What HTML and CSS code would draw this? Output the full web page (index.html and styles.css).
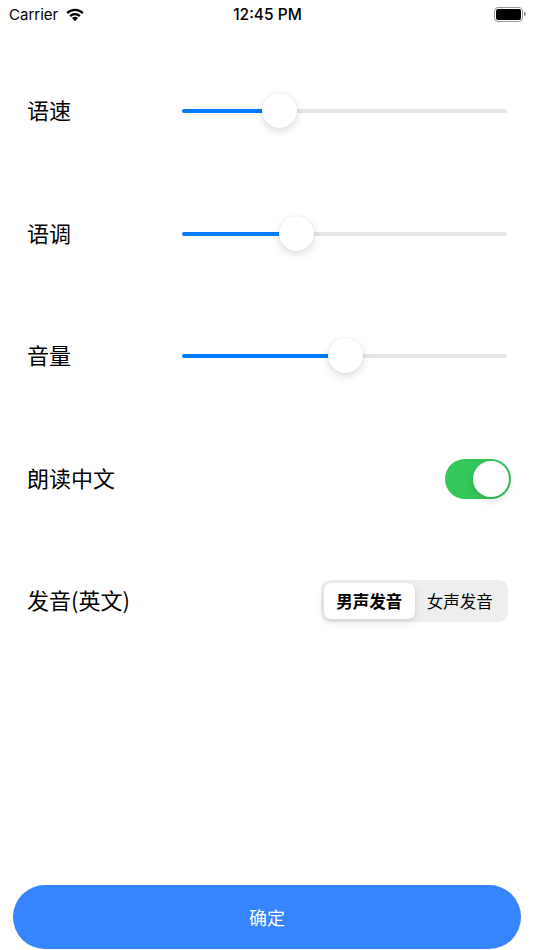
FILE: index.html
```html
<!DOCTYPE html>
<html lang="zh-CN">
<head>
    <meta charset="UTF-8">
    <title>语音设置</title>
    <link rel="stylesheet" href="styles.css">
</head>
<body>
    <div class="page">
        <div class="status-bar">
            <div class="carrier">
                Carrier
                <svg class="wifi" width="20" height="15" viewBox="0 0 18 13">
                    <path d="M9 12.5 L6.3 9.6 A3.8 3.8 0 0 1 11.7 9.6 Z" fill="#000"/>
                    <path d="M3.9 7.2 A7.3 7.3 0 0 1 14.1 7.2 L12.6 8.7 A5.2 5.2 0 0 0 5.4 8.7 Z" fill="#000"/>
                    <path d="M1.2 4.5 A11 11 0 0 1 16.8 4.5 L15.3 6 A8.9 8.9 0 0 0 2.7 6 Z" fill="#000"/>
                </svg>
            </div>
            <div class="time">12:45 PM</div>
            <div class="battery">
                <div class="battery-body"><div class="battery-level"></div></div>
                <div class="battery-cap"></div>
            </div>
        </div>

        <div class="settings">
            <div class="row">
                <div class="label">语速</div>
                <div class="slider" style="--pos: 97px;">
                    <div class="track"></div>
                    <div class="fill"></div>
                    <div class="thumb"></div>
                </div>
            </div>
            <div class="row">
                <div class="label">语调</div>
                <div class="slider" style="--pos: 114px;">
                    <div class="track"></div>
                    <div class="fill"></div>
                    <div class="thumb"></div>
                </div>
            </div>
            <div class="row">
                <div class="label">音量</div>
                <div class="slider" style="--pos: 163px;">
                    <div class="track"></div>
                    <div class="fill"></div>
                    <div class="thumb"></div>
                </div>
            </div>
            <div class="row">
                <div class="label">朗读中文</div>
                <div class="switch on"><div class="knob"></div></div>
            </div>
            <div class="row">
                <div class="label">发音(英文)</div>
                <div class="segmented">
                    <div class="segment active">男声发音</div>
                    <div class="segment">女声发音</div>
                </div>
            </div>
        </div>

        <button class="confirm">确定</button>
    </div>
</body>
</html>
```

FILE: styles.css
```css
:root {
    --blue: #007aff;
    --green: #34c759;
    --track: #e5e5e7;
}

body {
    margin: 0;
    background: #fff;
    font-family: 'Noto Sans CJK SC', 'Noto Sans', sans-serif;
    color: #000;
}

.page {
    display: flex;
    flex-direction: column;
    min-height: 100vh;
}

.status-bar {
    height: 28px;
    display: flex;
    align-items: center;
    justify-content: space-between;
    padding: 0 8px 0 9px;
    font-family: 'Inter', 'Liberation Sans', sans-serif;
    font-size: 15px;
}

.carrier {
    flex: 1;
    display: flex;
    align-items: center;
    gap: 7px;
}

.time {
    font-weight: 500;
    font-size: 15.5px;
}

.battery {
    flex: 1;
    display: flex;
    justify-content: flex-end;
    align-items: center;
}

.battery-body {
    width: 25px;
    height: 11px;
    border: 1px solid #9a9a9a;
    border-radius: 4px;
    padding: 1px;
}

.battery-level {
    height: 100%;
    background: #000;
    border-radius: 2px;
}

.battery-cap {
    width: 2px;
    height: 4px;
    margin-left: 1px;
    background: #9a9a9a;
    border-radius: 0 2px 2px 0;
}

.settings {
    flex: 1;
    padding-top: 22px;
}

.row {
    height: 122.5px;
    display: flex;
    align-items: center;
    padding: 0 23px 0 27px;
}

.label {
    width: 155px;
    padding-bottom: 4px;
    font-size: 22px;
    line-height: 1;
}

.slider {
    position: relative;
    flex: 1;
    margin-right: 4px;
    height: 36px;
}

.track, .fill {
    position: absolute;
    top: 16px;
    left: 0;
    height: 4px;
    border-radius: 2px;
}

.track {
    right: 0;
    background: var(--track);
}

.fill {
    width: var(--pos);
    background: var(--blue);
}

.thumb {
    position: absolute;
    top: 0;
    left: calc(var(--pos) - 17px);
    width: 35px;
    height: 35px;
    border-radius: 50%;
    background: #fff;
    box-shadow: 0 3px 8px rgba(0,0,0,0.15), 0 0 1px rgba(0,0,0,0.12);
}

.switch {
    margin-left: auto;
    width: 66px;
    height: 40px;
    border-radius: 20px;
    background: var(--track);
    display: flex;
    align-items: center;
    padding: 2px;
    box-sizing: border-box;
}

.switch.on {
    background: var(--green);
    justify-content: flex-end;
}

.knob {
    width: 36px;
    height: 36px;
    border-radius: 50%;
    background: #fff;
    box-shadow: 0 3px 8px rgba(0,0,0,0.15);
}

.segmented {
    margin-left: auto;
    margin-right: 3px;
    display: flex;
    width: 187px;
    height: 42px;
    padding: 3px;
    box-sizing: border-box;
    background: #eeeeef;
    border-radius: 9px;
}

.segment {
    flex: 1;
    display: flex;
    align-items: center;
    justify-content: center;
    font-size: 16.5px;
    border-radius: 7px;
}

.segment.active {
    background: #fff;
    font-weight: 600;
    box-shadow: 0 3px 8px rgba(0,0,0,0.12), 0 0 1px rgba(0,0,0,0.1);
}

.confirm {
    margin: 0 13px 1px;
    height: 64px;
    border: none;
    border-radius: 32px;
    background: #3685fe;
    color: #fff;
    font-family: inherit;
    font-size: 18px;
}
```
